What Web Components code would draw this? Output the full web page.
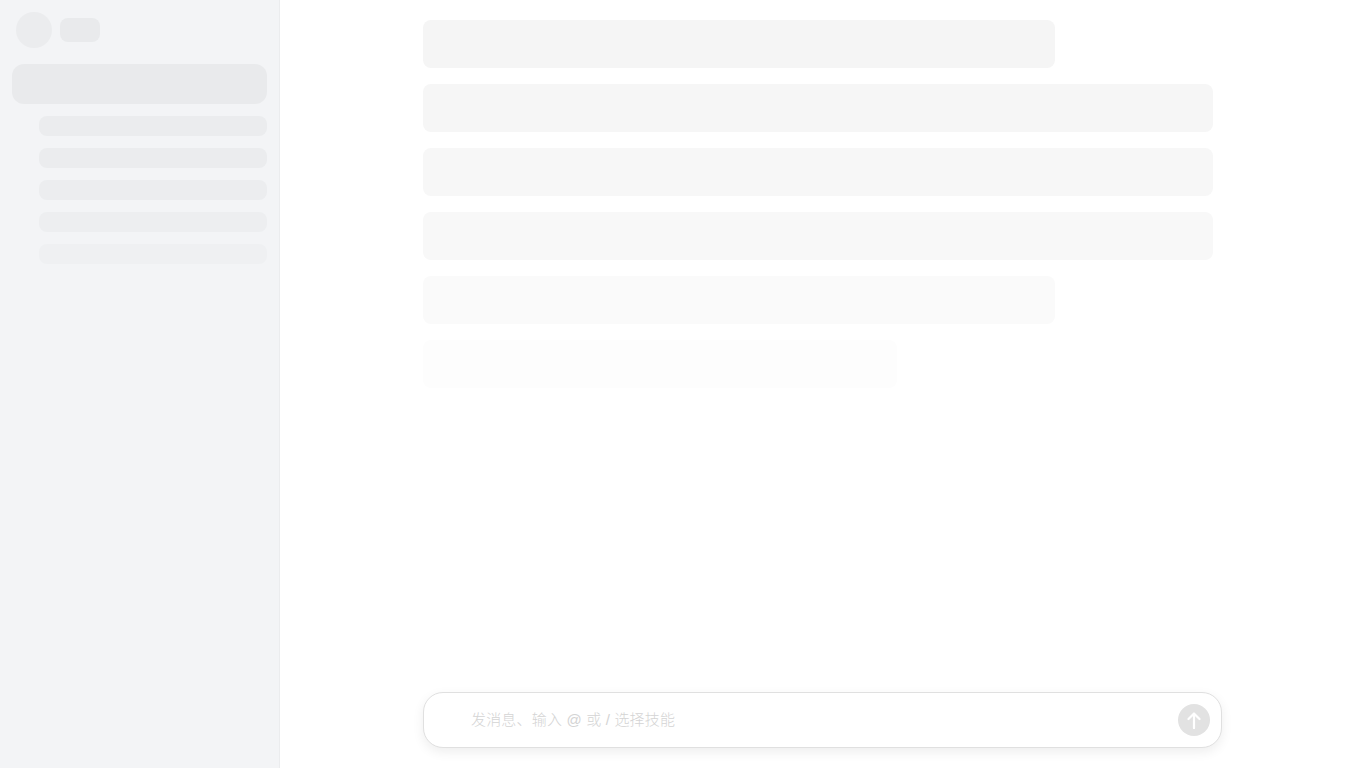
<!DOCTYPE html>
<html lang="zh">
<head>
<meta charset="utf-8">
<title>Loading</title>
<style>
    html, body { margin: 0; height: 100%; background: #fff; }
    body { font-family: "Liberation Sans", "Noto Sans CJK SC", sans-serif; }
</style>
</head>
<body>
<app-shell>
    <side-skeleton slot="side"></side-skeleton>
    <chat-skeleton slot="lines"></chat-skeleton>
    <chat-input slot="input" placeholder="发消息、输入 @ 或 / 选择技能"></chat-input>
</app-shell>
<script>
class AppShell extends HTMLElement {
    constructor() {
        super();
        this.attachShadow({ mode: 'open' });
        this.shadowRoot.innerHTML = `
            <style>
                :host {
                    display: grid;
                    grid-template-columns: 280px 1fr;
                    height: 768px;
                    overflow: hidden;
                }
                main {
                    display: flex;
                    flex-direction: column;
                    justify-content: space-between;
                    align-items: center;
                    padding: 20px 0 20px;
                    box-sizing: border-box;
                    height: 768px;
                }
                .column {
                    width: 800px;
                    display: block;
                }
            </style>
            <slot name="side"></slot>
            <main>
                <div class="column"><slot name="lines"></slot></div>
                <div class="column"><slot name="input"></slot></div>
            </main>
        `;
    }
}

class SideSkeleton extends HTMLElement {
    constructor() {
        super();
        this.attachShadow({ mode: 'open' });
        const rows = ['#ebecee', '#ebecee', '#ecedef', '#edeef0', '#eff0f2']
            .map(c => `<div class="row" style="background:${c}"></div>`)
            .join('');
        this.shadowRoot.innerHTML = `
            <style>
                :host {
                    display: block;
                    background: #f3f4f6;
                    border-right: 1px solid #ebecee;
                    box-sizing: border-box;
                    height: 768px;
                    padding: 12px 12px 0;
                }
                .head {
                    display: flex;
                    align-items: center;
                    gap: 8px;
                    padding-left: 4px;
                    margin-bottom: 16px;
                }
                .avatar {
                    width: 36px;
                    height: 36px;
                    border-radius: 50%;
                    background: #ebecee;
                }
                .name {
                    width: 40px;
                    height: 24px;
                    border-radius: 8px;
                    background: #e9eaec;
                }
                .big {
                    height: 40px;
                    border-radius: 12px;
                    background: #e9eaec;
                    margin-bottom: 12px;
                }
                .rows {
                    display: flex;
                    flex-direction: column;
                    gap: 12px;
                    padding-left: 27px;
                }
                .row {
                    height: 20px;
                    border-radius: 8px;
                }
            </style>
            <div class="head"><div class="avatar"></div><div class="name"></div></div>
            <div class="big"></div>
            <div class="rows">${rows}</div>
        `;
    }
}

class ChatSkeleton extends HTMLElement {
    constructor() {
        super();
        this.attachShadow({ mode: 'open' });
        const lines = [
            [80, '#f5f5f5'],
            [100, '#f6f6f6'],
            [100, '#f7f7f7'],
            [100, '#f8f8f8'],
            [80, '#fafafa'],
            [60, '#fdfdfd']
        ].map(([w, c]) => `<div class="line" style="width:${w}%;background:${c}"></div>`).join('');
        this.shadowRoot.innerHTML = `
            <style>
                :host {
                    display: block;
                    width: 790px;
                }
                .lines {
                    display: flex;
                    flex-direction: column;
                    gap: 16px;
                }
                .line {
                    height: 48px;
                    border-radius: 8px;
                }
            </style>
            <div class="lines">${lines}</div>
        `;
    }
}

class ChatInput extends HTMLElement {
    connectedCallback() {
        if (this.shadowRoot) return;
        this.attachShadow({ mode: 'open' });
        this.shadowRoot.innerHTML = `
            <style>
                :host {
                    display: block;
                    width: 799px;
                }
                .box {
                    display: flex;
                    align-items: center;
                    justify-content: space-between;
                    height: 56px;
                    box-sizing: border-box;
                    padding: 0 11px 0 47px;
                    background: #fff;
                    border: 1px solid #e0e0e0;
                    border-radius: 20px;
                    box-shadow: 0 4px 12px rgba(0, 0, 0, 0.07);
                }
                .text {
                    font: 300 15px/20px "Liberation Sans", "Noto Sans CJK SC", sans-serif;
                    letter-spacing: 0.18px;
                    color: #d4d4d4;
                }
                .send {
                    width: 32px;
                    height: 32px;
                    border-radius: 50%;
                    background: #e2e2e2;
                    display: flex;
                    align-items: center;
                    justify-content: center;
                }
            </style>
            <div class="box">
                <span class="text">${this.getAttribute('placeholder')}</span>
                <span class="send">
                    <svg width="18" height="18" viewBox="0 0 18 18" fill="none" stroke="#fff" stroke-width="2.2" stroke-linecap="round" stroke-linejoin="round">
                        <path d="M9 17V2.5M3.5 8L9 2.5 14.5 8"/>
                    </svg>
                </span>
            </div>
        `;
    }
}

customElements.define('app-shell', AppShell);
customElements.define('side-skeleton', SideSkeleton);
customElements.define('chat-skeleton', ChatSkeleton);
customElements.define('chat-input', ChatInput);
</script>
</body>
</html>
